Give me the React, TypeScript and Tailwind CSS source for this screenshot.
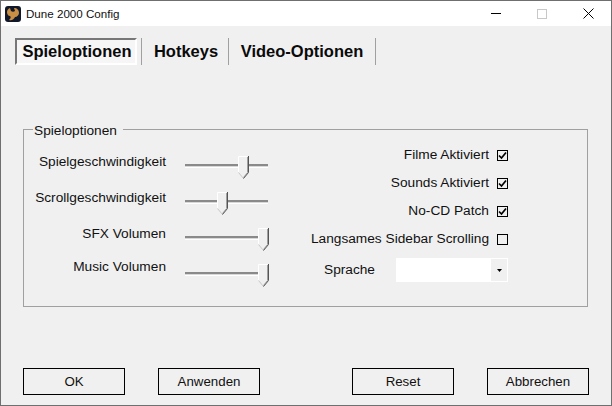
const font = "font-['Liberation_Sans',Arial,sans-serif]";

const Thumb = () => (
  <svg width="11" height="23" viewBox="0 0 11 23" className="block">
    <path d="M0.5 0.5H10.5V16.5L5.5 22.5L0.5 16.5Z" fill="#f0f0f0" />
    <path d="M0.5 16.5V0.5H9.5" fill="none" stroke="#ffffff" />
    <path d="M0.5 16.5L5.5 22.5" fill="none" stroke="#c8c8c8" />
    <path d="M9.5 1V16.5L5.5 21.5" fill="none" stroke="#a0a0a0" />
    <path d="M10.5 0V16.5L5.5 22.5" fill="none" stroke="#555555" />
  </svg>
);

const Slider = ({ left }: { left: number }) => (
  <div className="relative h-[23px] w-[83px]">
    <div className="absolute left-0 right-0 top-[8px] h-[4px] border-t-2 border-b border-t-[#8a8a8a] border-b-white bg-[#d8d8d8]" />
    <div className="absolute top-0" style={{ left }}>
      <Thumb />
    </div>
  </div>
);

const Check = ({ on }: { on: boolean }) => (
  <div className="flex h-[11px] w-[11px] items-center justify-center border border-black bg-[#f0f0f0]">
    {on && (
      <svg width="9" height="9" viewBox="0 0 9 9">
        <path d="M1 4.5L3.5 7L8 1.5" fill="none" stroke="#000" strokeWidth="1.7" />
      </svg>
    )}
  </div>
);

const Button = ({ label }: { label: string }) => (
  <button className="h-[27px] w-[102px] border border-black bg-[#f0f0f0] text-[13.3px] text-[#111]">{label}</button>
);

const sliders = [
  { label: "Spielgeschwindigkeit", left: 53, labelClass: "mt-[3px]" },
  { label: "Scrollgeschwindigkeit", left: 32, labelClass: "mt-[3px]" },
  { label: "SFX Volumen", left: 73, labelClass: "mt-[3px]" },
  { label: "Music Volumen", left: 73, labelClass: "mt-0" },
];

const checks = [
  { label: "Filme Aktiviert", on: true },
  { label: "Sounds Aktiviert", on: true },
  { label: "No-CD Patch", on: true },
  { label: "Langsames Sidebar Scrolling", on: false },
];

export default function App() {
  return (
    <div className={`${font} flex h-[406px] w-[612px] flex-col border border-[#6f6f6f] bg-[#f0f0f0] text-[#111]`}>
      <div className="flex h-[25px] shrink-0 items-center bg-white pl-[4px]">
        <svg width="16" height="16" viewBox="0 0 16 16" className="shrink-0">
          <rect x="0" y="0" width="16" height="16" rx="3" fill="#10182a" />
          <path d="M2 6C2 4 3 3 5 2L6 5C7 6 9 6 10 5L9 2C12 2 14 4 14 7C14 9 12 11 10 11C9 13 7 15 4 14C6 12 6 11 5 10C3 10 2 8 2 6Z" fill="#c98f45" />
        </svg>
        <span className="ml-[5px] text-[11.6px]">Dune 2000 Config</span>
        <div className="ml-auto flex items-center">
          <div className="flex w-[46px] justify-center">
            <div className="h-px w-[10px] bg-black" />
          </div>
          <div className="flex w-[46px] justify-center">
            <div className="h-[10px] w-[10px] border border-[#c8c8c8]" />
          </div>
          <div className="flex w-[46px] justify-center">
            <svg width="11" height="11" viewBox="0 0 11 11">
              <path d="M0.5 0.5L10.5 10.5M10.5 0.5L0.5 10.5" stroke="#000" />
            </svg>
          </div>
        </div>
      </div>

      <div className="mt-[12px] flex h-[27px] items-stretch pl-[14px] text-[16.5px] font-bold text-[#0a0a0a]">
        <div className="flex w-[122px] items-center justify-center border-2 border-t-[#777] border-l-[#777] border-r-white border-b-white bg-[#f6f6f6] pl-[2px]">
          Spieloptionen
        </div>
        <div className="ml-[4px] w-px bg-[#a0a0a0]" />
        <div className="flex w-[86px] items-center justify-center pl-[2px]">Hotkeys</div>
        <div className="w-px bg-[#a0a0a0]" />
        <div className="flex w-[146px] items-center justify-center">Video-Optionen</div>
        <div className="w-px bg-[#a0a0a0]" />
      </div>

      <fieldset className="ml-[22px] mr-[23px] mt-[56px] h-[186px] border border-[#a0a0a0] pl-[9px] text-[13.7px]">
        <legend className="pl-px pr-[6px] text-[13.7px] leading-[16px]">
          <span className="block translate-y-[2px]">Spieloptionen</span>
        </legend>
        <div className="flex">
          <div className="mt-[12px] flex w-[236px] flex-col">
            {sliders.map((s) => (
              <div key={s.label} className="flex h-[36px] items-start">
                <span className={`${s.labelClass} w-[133px] whitespace-nowrap text-right`}>{s.label}</span>
                <div className="ml-[19px] mt-[7px]">
                  <Slider left={s.left} />
                </div>
              </div>
            ))}
          </div>
          <div className="ml-auto mr-[79px] mt-[4px] flex flex-col items-end">
            {checks.map((c) => (
              <div key={c.label} className="flex h-[28px] items-center gap-[8px]">
                <span className="whitespace-nowrap">{c.label}</span>
                <Check on={c.on} />
              </div>
            ))}
            <div className="mt-[5px] flex h-[24px] w-[196px] items-center">
              <span className="ml-[12px]">Sprache</span>
              <div className="ml-auto flex h-[24px] w-[112px] justify-end bg-white">
                <div className="m-px flex w-[16px] items-center justify-center bg-[#f0f0f0]">
                  <svg width="5" height="3" viewBox="0 0 5 3">
                    <path d="M0 0H5L2.5 3Z" fill="#000" />
                  </svg>
                </div>
              </div>
            </div>
          </div>
        </div>
      </fieldset>

      <div className="mt-[61px] flex justify-between pl-[22px] pr-[22px]">
        <div className="flex gap-[33px]">
          <Button label="OK" />
          <Button label="Anwenden" />
        </div>
        <div className="flex gap-[33px]">
          <Button label="Reset" />
          <Button label="Abbrechen" />
        </div>
      </div>
    </div>
  );
}
